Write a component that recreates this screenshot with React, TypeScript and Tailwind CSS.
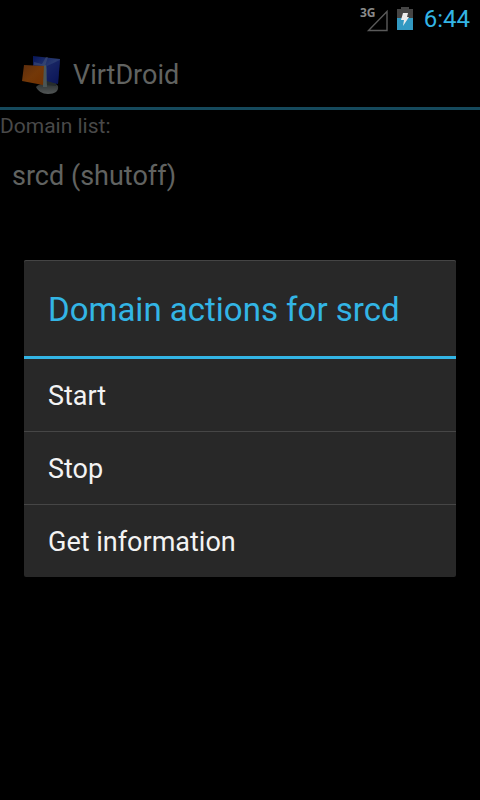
const actions = ['Start', 'Stop', 'Get information'];

function StatusBar() {
  return (
    <header className="flex h-[38px] shrink-0 items-center justify-end pr-2.5">
      <svg className="mr-1.5 h-8 w-8" viewBox="0 0 32 32" role="img" aria-label="3G signal">
        <text x="2" y="14" fill="#8a8a8a" fontSize="12" fontWeight="700" fontFamily="Noto Sans, sans-serif">3G</text>
        <path d="M10.5 27.5H29V8.5Z" fill="none" stroke="#5a5a5a" strokeWidth="1.4" />
      </svg>
      <svg className="mr-2.5 h-[30px] w-[18px]" viewBox="0 0 18 30" role="img" aria-label="Battery charging">
        <path d="M5 3h8v2h4v10H1V5h4Z" fill="#454545" />
        <path d="M1 14h16v12H1Z" fill="#3299c2" />
        <path d="M7 9h5l-1 4h2l-6 9 1-6H5Z" fill="#ececec" />
      </svg>
      <time className="text-2xl leading-8 text-[#33b5e5]">6:44</time>
    </header>
  );
}

function AppLogo() {
  return (
    <svg className="h-[50px] w-[48px]" viewBox="0 0 48 50" aria-hidden="true">
      <defs>
        <linearGradient id="screen" x1="0" y1="0" x2="1" y2="1">
          <stop offset="0" stopColor="#06155a" />
          <stop offset="0.5" stopColor="#293a70" />
          <stop offset="1" stopColor="#061152" />
        </linearGradient>
        <linearGradient id="front" x1="0" y1="0" x2="1" y2="1">
          <stop offset="0" stopColor="#5c2d0d" />
          <stop offset="0.5" stopColor="#733808" />
          <stop offset="1" stopColor="#713000" />
        </linearGradient>
        <linearGradient id="stand" x1="0" y1="0" x2="0" y2="1">
          <stop offset="0" stopColor="#2a2f2f" />
          <stop offset="1" stopColor="#525656" />
        </linearGradient>
      </defs>
      <path d="M20 37C24 32 39 31 42 36C43 41 39 44 32 44C26 44 22 41 20 37Z" fill="url(#stand)" />
      <path d="M30 30 40 33 40 36 29 35Z" fill="#262c2c" />
      <path d="M17 6 44 9 42 34 31 31 17 26Z" fill="url(#screen)" />
      <path d="M31 16 44 10 42 34 31 31Z" fill="#0b165a" opacity=".6" />
      <path d="M18 12 26 14 30 7 32 7 29 16 18 15Z" fill="#5c6a80" opacity=".35" />
      <path d="m27 16 3-1 1 22-4 0Z" fill="#4b5656" />
      <path d="M8 15 28 16 27 35 6 31Z" fill="url(#front)" />
    </svg>
  );
}

function ActionsDialog() {
  return (
    <div className="absolute inset-x-0 bottom-0 top-[38px] flex items-center px-6 pb-px">
      <section
        role="dialog"
        aria-modal="true"
        aria-labelledby="dialog-title"
        className="w-full overflow-hidden rounded-[2px] bg-[#282828] shadow-[inset_0_1px_0_#444444]"
      >
        <h2 id="dialog-title" className="border-b-[3px] border-[#33b5e5] px-6 pt-[26px] pb-[22px] text-[33px] leading-[48px] text-[#33b5e5]">
          Domain actions for srcd
        </h2>
        <ul className="divide-y divide-[#464646]">
          {actions.map((action) => (
            <li key={action}>
              <button type="button" className="block h-[72px] w-full px-6 pt-0.5 text-left text-[27px] text-[#f3f3f3]">
                {action}
              </button>
            </li>
          ))}
        </ul>
      </section>
    </div>
  );
}

export default function App() {
  return (
    <div className="relative flex min-h-screen flex-col bg-black font-[Roboto,sans-serif]">
      <StatusBar />
      <div className="flex h-[72px] items-center border-b-[3px] border-[#15495c] pt-1 pl-4">
        <AppLogo />
        <h1 className="pl-[9px] text-[27px] leading-8 text-[#616361]">VirtDroid</h1>
      </div>
      <main>
        <p className="text-[21px] leading-8 text-[#494949]">Domain list:</p>
        <ul>
          <li>
            <button type="button" className="block h-[72px] w-full px-3 pb-1 text-left text-[27px] text-[#616361]">
              srcd (shutoff)
            </button>
          </li>
        </ul>
      </main>
      <ActionsDialog />
    </div>
  );
}
